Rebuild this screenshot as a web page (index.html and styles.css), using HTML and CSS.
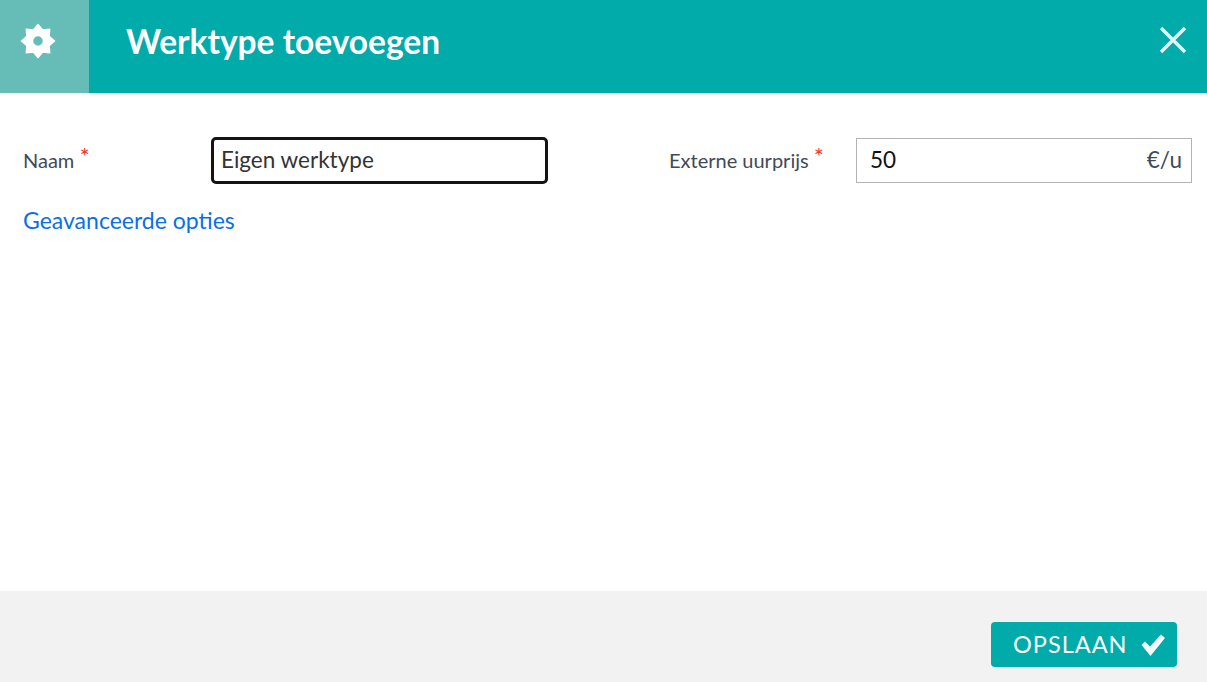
FILE: index.html
```html
<!DOCTYPE html>
<html lang="nl">
<head>
  <meta charset="UTF-8" />
  <title>Werktype toevoegen</title>
  <meta name="viewport" content="width=device-width, initial-scale=1" />
  <link rel="stylesheet" href="styles.css">
</head>
<body>

<div class="dialog">
  <header class="dialog-header">
    <div class="header-icon">
      <svg width="38" height="38" viewBox="0 0 38 38">
        <path fill-rule="evenodd" fill="#fff" stroke="#fff" stroke-width="1.5" stroke-linejoin="round" d="M19 2.5 L23.6 7.9 L30.7 7.3 L30.1 14.4 L35.5 19 L30.1 23.6 L30.7 30.7 L23.6 30.1 L19 35.5 L14.4 30.1 L7.3 30.7 L7.9 23.6 L2.5 19 L7.9 14.4 L7.3 7.3 L14.4 7.9 Z M19 13.5 A5.5 5.5 0 1 0 19 24.5 A5.5 5.5 0 1 0 19 13.5 Z"/>
      </svg>
    </div>
    <h1 class="header-title">Werktype toevoegen</h1>
    <a class="close-btn" href="#">
      <svg width="28" height="28" viewBox="0 0 28 28">
        <path d="M2 2 L26 26 M26 2 L2 26" stroke="#e6f6f5" stroke-width="3.4" fill="none"/>
      </svg>
    </a>
  </header>

  <main class="dialog-body">
    <div class="form-row">
      <div class="form-group group-name">
        <label class="form-label">Naam <span class="req">*</span></label>
        <div class="field field-focus">Eigen werktype</div>
      </div>
      <div class="form-group group-price">
        <label class="form-label">Externe uurprijs <span class="req">*</span></label>
        <div class="field field-price">
          <span class="value">50</span>
          <span class="unit">€/u</span>
        </div>
      </div>
    </div>
    <a class="advanced" href="#">Geavanceerde opties</a>
  </main>

  <footer class="dialog-footer">
    <button class="save-btn">
      <span class="save-text">OPSLAAN</span>
      <svg width="26" height="24" viewBox="0 0 26 24">
        <path d="M1.5 12 L5 8.5 L10 13.5 L21 1.5 L25 5 L10.5 23 Z" fill="#f4fbfb"/>
      </svg>
    </button>
  </footer>
</div>

</body>
</html>
```

FILE: styles.css
```css
html, body {
  height: 100%;
}
body {
  font-family: Lato, 'Open Sans', sans-serif;
  margin: 0;
  background: #fff;
  color: #333;
}
.dialog {
  height: 682px;
  display: flex;
  flex-direction: column;
  overflow: hidden;
}

/* Header */
.dialog-header {
  height: 93px;
  flex: none;
  display: flex;
  align-items: center;
  background: #00abaa;
  color: #fff;
}
.header-icon {
  width: 89px;
  height: 93px;
  background: #66bdb7;
  display: flex;
  align-items: center;
  justify-content: center;
  padding: 0 13px 11px 0;
  box-sizing: border-box;
}
.header-title {
  margin: 0 0 12px 37px;
  font-size: 33.5px;
  font-weight: 700;
  flex: 1;
}
.close-btn {
  display: flex;
  margin: 0 20px 13px 0;
}

/* Form */
.dialog-body {
  flex: 1;
  padding: 44px 15px 0 23px;
}
.form-row {
  display: flex;
  justify-content: space-between;
}
.form-group {
  display: flex;
  align-items: center;
}
.form-label {
  width: 188px;
  font-size: 20px;
  color: #3f4a5a;
  padding-bottom: 2px;
}
.group-price .form-label {
  width: 187px;
}
.req {
  color: #f0392f;
  font-size: 24px;
  line-height: 1;
  position: relative;
  top: -3px;
}
.field {
  box-sizing: border-box;
  width: 336px;
  height: 45px;
  background: #fff;
  font-size: 22.5px;
  line-height: 41px;
}
.field-focus {
  width: 337px;
  height: 47px;
  border: 3px solid #141414;
  border-radius: 5px;
  padding-left: 7px;
  line-height: 39px;
  color: #333;
}
.field-price {
  border: 1px solid #b3b3b3;
  padding: 0 9px 0 13px;
  display: flex;
  justify-content: space-between;
}
.value {
  color: #111;
}
.unit {
  color: #3f4a5a;
}
.advanced {
  display: block;
  margin-top: 23px;
  font-size: 23px;
  line-height: 27px;
  color: #0a6fe8;
  text-decoration: none;
}

/* Footer */
.dialog-footer {
  height: 91px;
  flex: none;
  background: #f2f2f2;
  display: flex;
  justify-content: flex-end;
  align-items: flex-start;
  padding: 31px 30px 0 0;
  box-sizing: border-box;
}
.save-btn {
  width: 186px;
  height: 45px;
  border: 0;
  border-radius: 4px;
  background: #00abaa;
  color: #fff;
  font-family: inherit;
  font-size: 23.5px;
  letter-spacing: 1px;
  display: flex;
  align-items: center;
  justify-content: flex-start;
  gap: 12px;
  padding: 0 0 0 22px;
}
.save-text {
  padding-bottom: 2px;
}
```
